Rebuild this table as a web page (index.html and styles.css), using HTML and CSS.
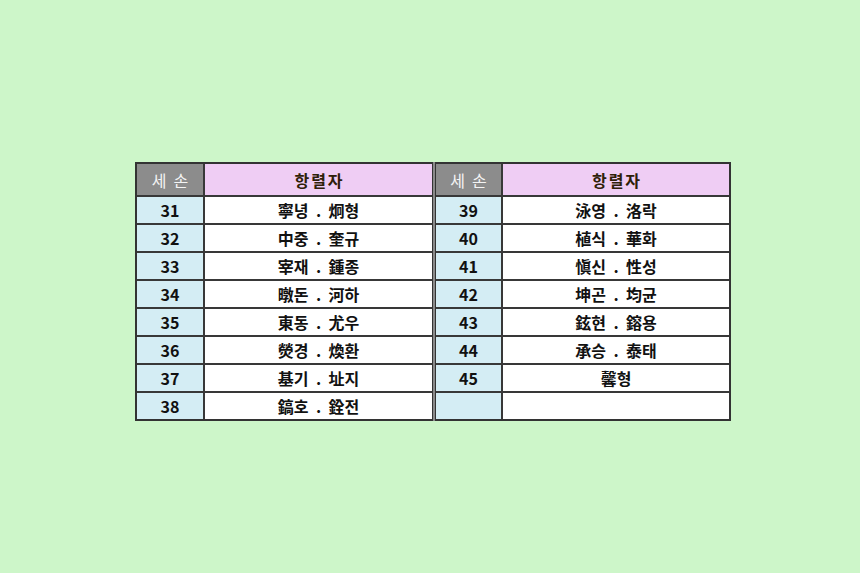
FILE: index.html
```html
<!DOCTYPE html>
<html lang="ko">
<head>
<meta charset="utf-8">
<title>항렬자</title>
<link rel="stylesheet" href="styles.css">
</head>
<body>
<div class="page">
  <div class="tables">
    <div class="tbl left">
      <div class="th num">세손</div><div class="th name">항렬자</div>
      <div class="td num">31</div><div class="td name">寧녕 . 炯형</div>
      <div class="td num">32</div><div class="td name">中중 . 奎규</div>
      <div class="td num">33</div><div class="td name">宰재 . 鍾종</div>
      <div class="td num">34</div><div class="td name">暾돈 . 河하</div>
      <div class="td num">35</div><div class="td name">東동 . 尤우</div>
      <div class="td num">36</div><div class="td name">熒경 . 煥환</div>
      <div class="td num">37</div><div class="td name">基기 . 址지</div>
      <div class="td num last">38</div><div class="td name last">鎬호 . 銓전</div>
    </div>
    <div class="tbl right">
      <div class="th num">세손</div><div class="th name">항렬자</div>
      <div class="td num">39</div><div class="td name">泳영 . 洛락</div>
      <div class="td num">40</div><div class="td name">植식 . 華화</div>
      <div class="td num">41</div><div class="td name">愼신 . 性성</div>
      <div class="td num">42</div><div class="td name">坤곤 . 均균</div>
      <div class="td num">43</div><div class="td name">鉉현 . 鎔용</div>
      <div class="td num">44</div><div class="td name">承승 . 泰태</div>
      <div class="td num">45</div><div class="td name">馨형</div>
      <div class="td num last"></div><div class="td name last"></div>
    </div>
  </div>
</div>
</body>
</html>
```
FILE: styles.css
```css
html, body {
  margin: 0;
  padding: 0;
  background: #cdf6c9;
}
.page {
  width: 860px;
  height: 573px;
  padding: 162px 0 0 135px;
  box-sizing: border-box;
}
.tables {
  display: flex;
  gap: 2px;
  width: max-content;
  background: #8a8a8a;
  font-family: "Noto Sans CJK KR", "Noto Sans", sans-serif;
}
.tbl {
  display: grid;
  grid-template-rows: 33px repeat(7, 28px) 26px;
  border-top: 2px solid #333;
  border-bottom: 2px solid #333;
  background: #ffffff;
}
.tbl.left {
  grid-template-columns: 68px 227px;
  border-left: 2px solid #333;
  border-right: 1px solid #333;
}
.tbl.right {
  grid-template-columns: 67px 226px;
  border-left: 1px solid #333;
  border-right: 2px solid #333;
}
.th, .td {
  box-sizing: border-box;
  display: flex;
  align-items: center;
  justify-content: center;
  border-bottom: 2px solid #383838;
}
.num {
  border-right: 2px solid #383838;
}
.td.last {
  border-bottom: 0;
}
.th.num {
  background: #8c8c8c;
  color: #f4f4f4;
  font-size: 16px;
  font-weight: 400;
  letter-spacing: 7px;
  padding-left: 7px;
}
.th.name {
  background: #efcdf4;
  color: #2e2008;
  font-size: 16px;
  font-weight: 700;
  letter-spacing: 2px;
  padding-left: 2px;
}
.td.num {
  background: #d4edf4;
  color: #111;
  font-size: 16px;
  font-weight: 700;
}
.td.name {
  background: #ffffff;
  color: #111;
  font-size: 16px;
  font-weight: 700;
  white-space: pre;
  word-spacing: 3px;
}
```
